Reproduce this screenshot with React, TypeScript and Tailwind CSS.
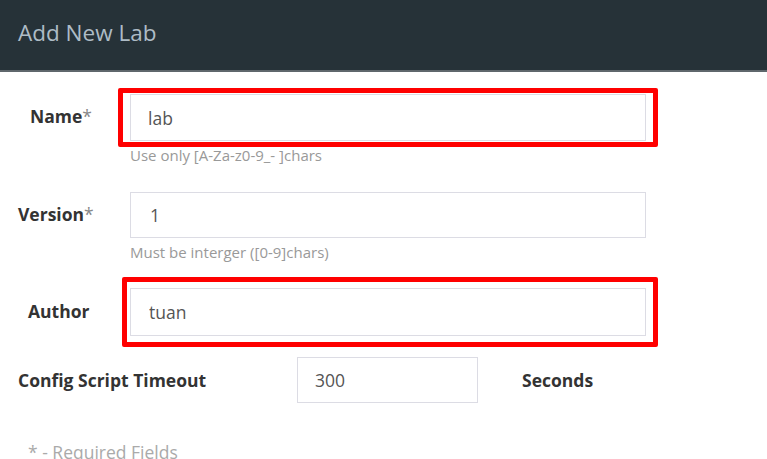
const font = { fontFamily: '"Open Sans", "Noto Sans", sans-serif' };

const App = () => {
  return (
    <div className="w-[767px] h-[459px] overflow-hidden bg-white" style={font}>
      <div className="h-[72px] bg-[#263238] border-b-2 border-[#5f676c] flex items-center px-[18px]">
        <h1 className="text-[22.5px] text-[#aebcc6] pb-[4px]">Add New Lab</h1>
      </div>

      <div className="pt-[22px]">
        {/* Name */}
        <div className="flex">
          <div className="w-[130px] pl-[30px] pt-[9px] text-[17.5px] font-bold text-[#333]">
            Name<span className="font-normal text-[#888]">*</span>
          </div>
          <div>
            <div className="relative">
              <input
                readOnly
                value="lab"
                className="w-[516px] h-[47px] border border-[#dcdce4] px-[17px] text-[17.5px] text-[#555] outline-none"
              />
              <div className="absolute -left-[12px] -top-[6px] -right-[12px] -bottom-[6px] border-[5px] border-[#ff0000] rounded-[2px]"></div>
            </div>
            <p className="mt-[3px] text-[15px] text-[#999]">Use only [A-Za-z0-9_- ]chars</p>
          </div>
        </div>

        {/* Version */}
        <div className="flex mt-[25px]">
          <div className="w-[130px] pl-[18px] pt-[9px] text-[17.5px] font-bold text-[#333]">
            Version<span className="font-normal text-[#888]">*</span>
          </div>
          <div>
            <input
              readOnly
              value="1"
              className="w-[516px] h-[46px] border border-[#dcdce4] px-[19px] text-[17.5px] text-[#555] outline-none"
            />
            <p className="mt-[3px] text-[15px] text-[#999]">Must be interger ([0-9]chars)</p>
          </div>
        </div>

        {/* Author */}
        <div className="flex mt-[25px]">
          <div className="w-[130px] pl-[28px] pt-[10px] text-[17.5px] font-bold text-[#333]">Author</div>
          <div className="relative">
            <input
              readOnly
              value="tuan"
              className="w-[516px] h-[48px] border border-[#dcdce4] px-[18px] text-[17.5px] text-[#555] outline-none"
            />
            <div className="absolute -left-[8px] -top-[11px] -right-[12px] -bottom-[11px] border-[5px] border-[#ff0000] rounded-[2px]"></div>
          </div>
        </div>

        {/* Timeout */}
        <div className="flex items-center mt-[21px]">
          <div className="w-[297px] pl-[18px] text-[17.5px] font-bold text-[#333]">Config Script Timeout</div>
          <input
            readOnly
            value="300"
            className="w-[181px] h-[46px] border border-[#dcdce4] px-[17px] text-[17.5px] text-[#555] outline-none"
          />
          <div className="pl-[44px] text-[17.5px] font-bold text-[#333]">Seconds</div>
        </div>

        <p className="mt-[36px] pl-[28px] text-[17.5px] text-[#aaa]">* - Required Fields</p>
      </div>
    </div>
  );
};

export default App;
